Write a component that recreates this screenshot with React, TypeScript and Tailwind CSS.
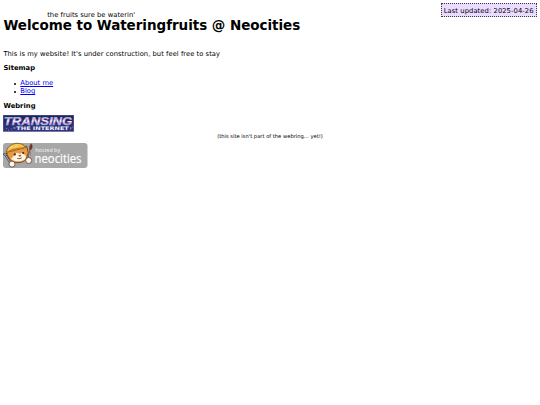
import type { ReactNode } from "react";

function SectionTitle({ children }: { children: ReactNode }) {
  return <h2 className="h-[8px] text-[6.75px] leading-[8px] font-bold tracking-[0.03px]">{children}</h2>;
}

function SitemapLink({ children }: { children: ReactNode }) {
  return (
    <li className="flex items-center gap-[4.6px]">
      <span className="mt-px size-[2px] rounded-full bg-black" />
      <a href="#" className="text-[#0000ee] underline">
        {children}
      </a>
    </li>
  );
}

function TransingBanner() {
  return (
    <svg className="block h-[17px] w-[71px]" viewBox="0 0 71 17" role="img" aria-label="Transing the Internet">
      <defs>
        <linearGradient id="night" x1="0" y1="0" x2="0" y2="1">
          <stop offset="0" stopColor="#202253" />
          <stop offset="1" stopColor="#353682" />
        </linearGradient>
        <linearGradient id="flag" gradientUnits="userSpaceOnUse" x1="0" y1="2" x2="0" y2="10">
          <stop offset="0" stopColor="#78b8ea" />
          <stop offset="0.3" stopColor="#e9b4e4" />
          <stop offset="0.5" stopColor="#ffffff" />
          <stop offset="0.7" stopColor="#e2ace6" />
          <stop offset="1" stopColor="#80bbed" />
        </linearGradient>
      </defs>
      <rect width="71" height="16.6" fill="url(#night)" />
      <rect x="0.25" y="0.25" width="70.5" height="16.1" fill="none" stroke="#6668a0" strokeWidth="0.5" />
      <path d="M3 13.5h1M5 15h1M8 14h1M67 14h1M69 12h1" stroke="#a8a6d5" strokeWidth="0.6" />
      <text
        x="0.8"
        y="9.9"
        textLength="68.5"
        lengthAdjust="spacingAndGlyphs"
        fill="url(#flag)"
        stroke="url(#flag)"
        strokeWidth="0.25"
        fontFamily="Liberation Sans, sans-serif"
        fontSize="11"
        fontStyle="italic"
        fontWeight="700"
      >
        TRANSING
      </text>
      <path d="M10.5 13h2M67 13h1.5" stroke="#dedcf5" strokeWidth="0.8" />
      <text
        x="13.3"
        y="14.8"
        textLength="52.5"
        lengthAdjust="spacingAndGlyphs"
        fill="#f0efff"
        fontFamily="DejaVu Sans, sans-serif"
        fontSize="4.8"
        fontWeight="700"
      >
        THE INTERNET
      </text>
    </svg>
  );
}

function NeocitiesBadge() {
  return (
    <svg className="block h-[25px] w-[85px] overflow-visible" viewBox="0 0 85 25" role="img" aria-label="Hosted by Neocities">
      <rect width="84.5" height="25" rx="3" fill="#a7a7a7" />
      {/* wrench */}
      <path d="M0.4 10.6l2.2 1.6 1.8-2M2.7 12.4l5 8.2" fill="none" stroke="#444" strokeWidth="2" />
      <path d="M0.8 10.9l1.8 1.2 1.5-1.6M2.7 12.4l4.7 7.6" fill="none" stroke="#c9cdd0" strokeWidth="0.8" />
      {/* brush */}
      <path d="M27.3 6.2l-1.5 10" stroke="#5a3b2d" strokeWidth="1.7" />
      <path d="M27.3 7l-1.1 8" stroke="#e9d9bd" strokeWidth="0.7" />
      <path d="M28.4 0.8c1.4 2.7.8 4.8-.8 6-1.7-1.5-1.1-4 .8-6z" fill="#8c2e24" stroke="#523029" strokeWidth="0.6" />
      {/* cat */}
      <path
        d="M5.4 5.6L3.9 11.3l2.8 5c4 4.6 12.6 4.4 16.3.1l2.3-6.3-1.6-6.8-4.5 2z"
        fill="#ee9840"
        stroke="#60402a"
        strokeWidth="0.9"
      />
      <path d="M13.5 9.8l-5.4 6.2c3.7 3 9.8 3.2 14 .2l1-3-3.5-3.2-3 .8z" fill="#fff4df" />
      <path
        d="M3.2 9.4C3.9 4.2 7.9 1.3 13 .3c4.9-.2 8.1 1.3 9.4 4.2l-6 1.6-7.2 2z"
        fill="#f5c34b"
        stroke="#755022"
        strokeWidth="0.8"
      />
      <path d="M3.2 9.6l7-3.3 12.5-2" fill="none" stroke="#b67b25" strokeWidth="1.2" />
      <path d="M7 5.2l3-2.4M11.5 4.3l3-2.6" stroke="#ffe391" strokeWidth="0.9" />
      <circle cx="11.8" cy="11.4" r="1.1" fill="#382b25" />
      <circle cx="20.2" cy="10" r="1.1" fill="#382b25" />
      <path d="M15.8 12.3h2.2l-1 1.3zM14 15.4q2.6 1 5-.7" fill="#704035" stroke="#704035" strokeWidth="0.6" />
      {/* paws */}
      <circle cx="9" cy="21.1" r="3" fill="#fff7ec" stroke="#5b4333" strokeWidth="0.8" />
      <circle cx="25.7" cy="17.5" r="3" fill="#fff7ec" stroke="#5b4333" strokeWidth="0.8" />
      <text
        x="32.2"
        y="9.4"
        textLength="25"
        lengthAdjust="spacingAndGlyphs"
        fill="#f4f4f4"
        fontFamily="Open Sans, sans-serif"
        fontSize="5.7"
      >
        hosted by
      </text>
      <text
        x="31.6"
        y="19.8"
        textLength="46.9"
        lengthAdjust="spacingAndGlyphs"
        fill="#ffffff"
        stroke="#ffffff"
        strokeWidth="0.2"
        fontFamily="Open Sans, sans-serif"
        fontSize="13"
      >
        neocities
      </text>
    </svg>
  );
}

export default function App() {
  return (
    <main className="flex h-[405px] w-[540px] flex-col items-start overflow-hidden bg-white px-[3.4px] pt-[3px] font-['DejaVu_Sans',sans-serif] text-[6.75px] leading-[8px] text-black">
      <header className="flex h-[14px] w-full items-start justify-between">
        <p className="pt-[7.5px] pl-[43.8px] tracking-[0.02px] whitespace-nowrap">the fruits sure be waterin'</p>
        <p className="h-[14px] w-[96px] border border-dotted border-[#3f3547] bg-[#eadcff] pt-px text-center leading-[13px] tracking-[0.08px] whitespace-nowrap">
          Last updated: 2025-04-26
        </p>
      </header>

      <h1 className="h-[16px] text-[13.5px] leading-[16px] font-bold tracking-[-0.04px] whitespace-nowrap">
        Welcome to Wateringfruits @ Neocities
      </h1>
      <p className="mt-[17px] tracking-[0.036px] whitespace-nowrap">
        This is my website! It's under construction, but feel free to stay
      </p>

      <section className="mt-[6px]">
        <SectionTitle>Sitemap</SectionTitle>
        <ul className="mt-[7px] pl-[10.3px]">
          <SitemapLink>About me</SitemapLink>
          <SitemapLink>Blog</SitemapLink>
        </ul>
      </section>

      <section className="mt-[6.5px] w-full">
        <SectionTitle>Webring</SectionTitle>
        <div className="mt-[5px]">
          <TransingBanner />
        </div>
        <p className="h-[11px] pt-[1px] text-center text-[5.2px] leading-[7px]">
          (this site isn't part of the webring... yet!)
        </p>
        <NeocitiesBadge />
      </section>
    </main>
  );
}
